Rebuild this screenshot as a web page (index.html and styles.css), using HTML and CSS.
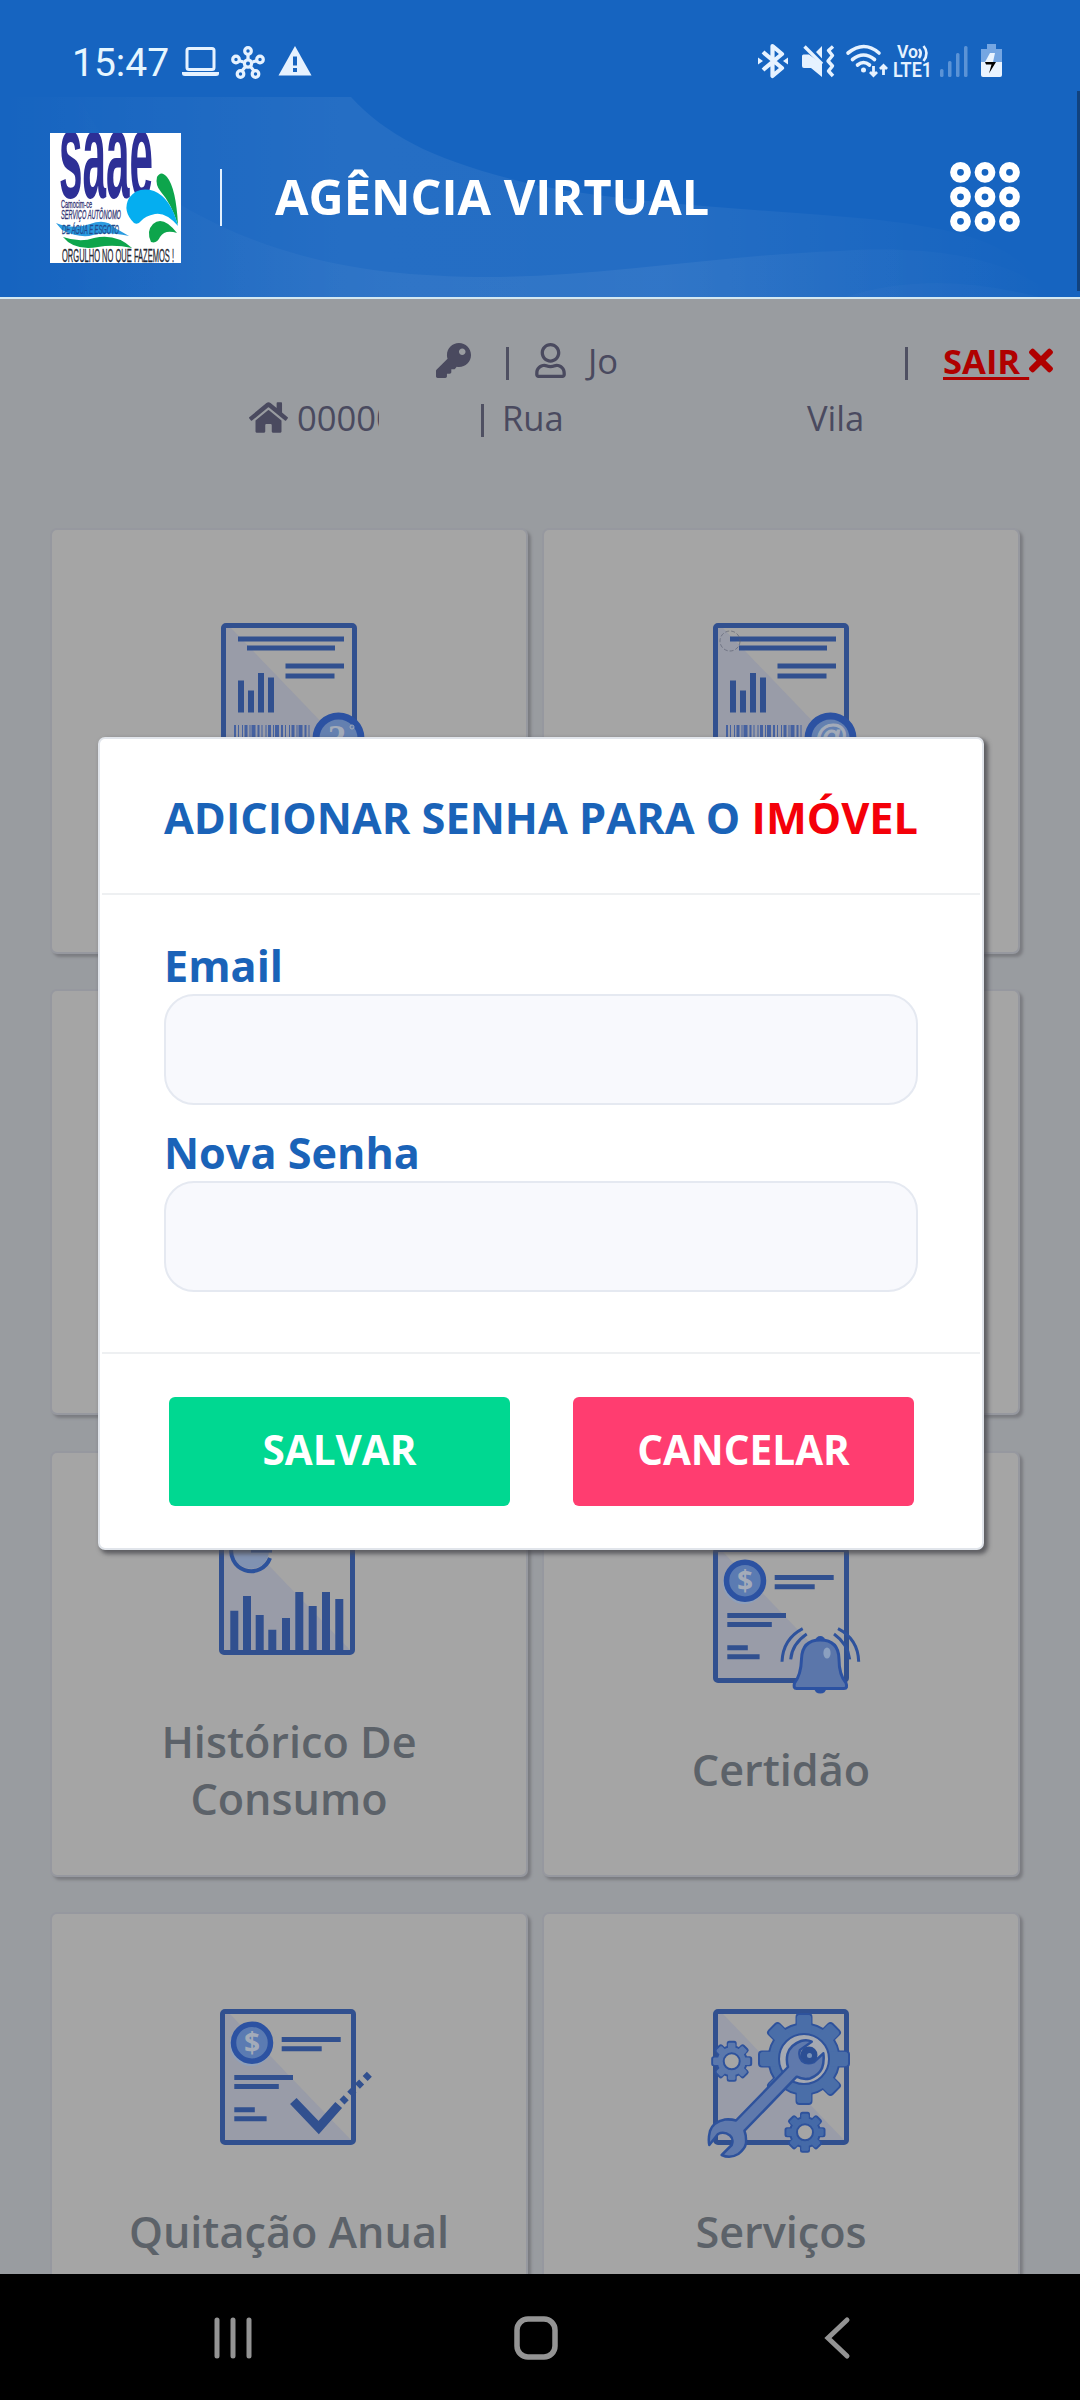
FILE: index.html
```html
<!DOCTYPE html>
<html lang="pt-BR">
<head>
<meta charset="utf-8">
<title>Agência Virtual</title>
<link rel="stylesheet" href="styles.css">
</head>
<body>
<div class="screen">
  <div class="status">
    <div class="status-left">
      <span class="clock">15:47</span>
      <svg class="ic-laptop" width="37" height="30" viewBox="0 0 37 30"><rect x="5" y="1.500" width="27" height="21" rx="2" fill="none" stroke="#e6f2ff" stroke-width="3"/><path d="M0 25h37v1.500q0 2.500-3 2.500H3q-3 0-3-2.500z" fill="#e6f2ff"/></svg>
      <svg class="ic-hub" width="34" height="34" viewBox="0 0 34 34" fill="none" stroke="#e6f2ff" stroke-width="3.200"><path d="M17 9v5M12.500 16l-5-1.500M21.500 16l5-1.500M14.500 20.500l-4 5M19.500 20.500l4 5"/><circle cx="17" cy="17.500" r="3.600"/><circle cx="17" cy="5" r="3.300"/><circle cx="5" cy="13.500" r="3.300"/><circle cx="29" cy="13.500" r="3.300"/><circle cx="9.500" cy="28" r="3.300"/><circle cx="24.500" cy="28" r="3.300"/></svg>
      <svg class="ic-warn" width="34" height="30" viewBox="0 0 34 30"><path d="M17 0L33.500 29.500H.5z" fill="#e6f2ff"/><path d="M15 10.500h4v9h-4zM15 22h4v4h-4z" fill="#1664c0"/></svg>
    </div>
    <div class="status-right">
      <svg width="30" height="34" viewBox="0 0 30 34"><path d="M5 8L24 24l-9.500 8V2L24 10 5 26" fill="none" stroke="#e6f2ff" stroke-width="4.200" stroke-linejoin="round"/><path d="M0 13.500l5 3.500-5 3.500zM30 13.500L25 17l5 3.500z" fill="#e6f2ff"/></svg>
      <svg class="ic-mute" width="32" height="34" viewBox="0 0 32 34"><path d="M0 12q0-1.500 1.500-1.500H7L20 20v13L9 24H2q-2 0-2-2zM20 2v12.500L14 8z" fill="#e6f2ff"/><path d="M2.500 2.500L20 20" stroke="#e6f2ff" stroke-width="3.400"/><path d="M31 2.500L26.500 6.500 30.500 11.500 26 17 30.500 22 26.500 27 31 32" fill="none" stroke="#e6f2ff" stroke-width="3.400" stroke-linejoin="round"/></svg>
      <svg class="ic-wifi" width="42" height="34" viewBox="0 0 42 34" fill="none" stroke="#e6f2ff" stroke-width="3.600" stroke-linecap="round"><path d="M2 9q16-13 31 0M6.500 15.500q11-9 22 0M11.500 21q6-5 12 0"/><circle cx="17.500" cy="26" r="2.500" fill="#e6f2ff" stroke="none"/><path d="M27.500 22v9m-3.500-3l3.500 3.500L31 28M37.500 31v-9m-3.500 3l3.500-3.500L41 25" stroke-width="2.800" stroke-linecap="butt"/></svg>
      <svg class="ic-lte" width="40" height="36" viewBox="0 0 40 36"><g fill="#e6f2ff" font-family="Roboto, sans-serif" font-weight="600"><text x="4" y="14" font-size="18" textLength="21" lengthAdjust="spacingAndGlyphs">Vo</text><text x="0" y="33" font-size="19.500" textLength="39" lengthAdjust="spacingAndGlyphs">LTE1</text></g><path d="M26 5q3.500 4 0 9M30.500 2q6 7 0 15" fill="none" stroke="#e6f2ff" stroke-width="2.600"/></svg>
      <svg class="ic-signal" width="28" height="32" viewBox="0 0 28 32" fill="#5b93d6"><rect x="0" y="23" width="3.500" height="8" rx="1.500"/><rect x="8" y="15" width="3.500" height="16" rx="1.500"/><rect x="16" y="7" width="3.500" height="24" rx="1.500"/><rect x="24" y="0" width="3.500" height="31" rx="1.500"/></svg>
      <svg class="ic-batt" width="21" height="34" viewBox="0 0 21 34"><path d="M6 0h9v5h6v13H0V5h6z" fill="#75a6e2"/><path d="M0 18h21v13q0 2-2 2H2q-2 0-2-2z" fill="#eaf4ff"/><path d="M9 9h5l-2 9H4z" fill="#eaf4ff"/><path d="M4 18h11L8 29.500l2.500-9H5z" fill="#000"/></svg>
    </div>
  </div>
  <header class="header">
    <svg class="waves" width="1077" height="200" viewBox="0 0 1077 200">
      <defs>
        <linearGradient id="w1" gradientUnits="userSpaceOnUse" x1="0" y1="0" x2="1040" y2="0"><stop offset="0" stop-color="#fff" stop-opacity="0"/><stop offset=".33" stop-color="#fff" stop-opacity=".065"/><stop offset=".65" stop-color="#fff" stop-opacity=".06"/><stop offset="1" stop-color="#fff" stop-opacity="0"/></linearGradient>
        <linearGradient id="w2" gradientUnits="userSpaceOnUse" x1="60" y1="0" x2="1060" y2="0"><stop offset="0" stop-color="#fff" stop-opacity="0"/><stop offset=".35" stop-color="#fff" stop-opacity=".05"/><stop offset=".6" stop-color="#fff" stop-opacity=".06"/><stop offset="1" stop-color="#fff" stop-opacity="0"/></linearGradient>
      </defs>
      <path d="M0 0H351C390 42 440 66 540 89 640 108 760 112 870 122 960 132 1020 145 1050 200H0z" fill="url(#w1)"/>
      <path d="M80 0C110 64 155 98 225 131 300 165 380 180 490 180 600 180 720 158 840 154 930 148 1010 160 1055 200H0V0z" fill="url(#w2)"/>
      <path d="M845 200Q930 172 1040 200z" fill="#fff" fill-opacity=".02"/>
    </svg>
    <svg class="logo" width="131" height="130" viewBox="0 0 131 130">
      <rect width="131" height="130" fill="#fff"/>
      <g font-family="'Liberation Sans', sans-serif">
        <text x="9" y="65" font-size="124" font-weight="700" fill="#2d2f96" textLength="94" lengthAdjust="spacingAndGlyphs">saae</text>
        <g fill="#2f3170" stroke="#2f3170" stroke-width=".3">
          <text x="11" y="75" font-size="11" textLength="31" lengthAdjust="spacingAndGlyphs">Camocim-ce</text>
          <text x="11" y="86" font-size="12" font-style="italic" textLength="60" lengthAdjust="spacingAndGlyphs">SERVIÇO AUTÔNOMO</text>
        </g>
        <path d="M6 90Q24 97 40 91t25 4l14 8Q55 98 43 102T12 97z" fill="#2b9be0"/>
        <text x="12" y="101" font-size="12" font-style="italic" fill="#234a8c" stroke="#234a8c" stroke-width=".3" textLength="57" lengthAdjust="spacingAndGlyphs">DE ÁGUA E ESGOTO</text>
        <path d="M13 104Q30 110 44 105 66 100 82 115 64 111 48 114 24 118 13 104z" fill="#0da54c"/>
        <text x="12" y="129" font-size="17.500" fill="#262833" stroke="#262833" stroke-width=".3" textLength="112" lengthAdjust="spacingAndGlyphs">ORGULHO NO QUE FAZEMOS !</text>
      </g>
      <path d="M107 44Q111 37 117 44 126 55 128 92 121 70 111 59 105 52 107 44z" fill="#0da54c"/>
      <path d="M84 90Q72 78 79 65 88 53 104 58 121 65 128 93 116 79 105 81 95 83 91 88 88 92 84 90z" fill="#05aef0"/>
      <path d="M101 109Q96 98 103 91 113 82 127 100 115 96 110 104 107 111 101 109z" fill="#0da54c"/>
    </svg>
    <span class="divider"></span>
    <h1 class="brand">AGÊNCIA VIRTUAL</h1>
    <svg class="menu" width="70" height="74" viewBox="0 0 70 74" fill="none" stroke="#fff" stroke-width="7"><g id="dots"><circle cx="10.500" cy="12.300" r="6.900"/><circle cx="35" cy="12.300" r="6.900"/><circle cx="59.500" cy="12.300" r="6.900"/></g><use href="#dots" y="24.500"/><use href="#dots" y="49"/></svg>
    <span class="edge"></span>
  </header>

  <main class="content">
    <div class="info">
      <div class="info-row row-user">
        <svg class="ic-key" width="35" height="35" viewBox="0 0 512 512"><path d="M512 176.001C512 273.203 433.202 352 336 352c-11.220 0-22.190-1.062-32.827-3.069l-24.012 27.014A23.999 23.999 0 0 1 261.223 384H224v40c0 13.255-10.745 24-24 24h-40v40c0 13.255-10.745 24-24 24H24c-13.255 0-24-10.745-24-24v-78.059c0-6.365 2.529-12.470 7.029-16.971l161.802-161.802C163.108 213.814 160 195.271 160 176 160 78.798 238.797.001 335.999 0 433.488-.001 512 78.511 512 176.001zM336 128c0 26.510 21.490 48 48 48s48-21.490 48-48-21.490-48-48-48-48 21.490-48 48z"/></svg>
        <span class="pipe"></span>
        <svg class="ic-user" width="31" height="35" viewBox="0 0 448 512"><path d="M313.600 304c-28.700 0-42.500 16-89.600 16-47.100 0-60.800-16-89.600-16C60.200 304 0 364.200 0 438.400V464c0 26.500 21.500 48 48 48h352c26.500 0 48-21.500 48-48v-25.600c0-74.200-60.200-134.400-134.400-134.400zM400 464H48v-25.600c0-47.600 38.800-86.400 86.400-86.400 14.600 0 38.300 16 89.600 16 51.700 0 74.900-16 89.600-16 47.600 0 86.400 38.800 86.400 86.400V464zM224 288c79.500 0 144-64.500 144-144S303.500 0 224 0 80 64.500 80 144s64.500 144 144 144zm0-240c52.900 0 96 43.100 96 96s-43.100 96-96 96-96-43.100-96-96 43.100-96 96-96z"/></svg>
        <span class="user-name">Jo</span>
        <span class="pipe"></span>
        <a class="logout"><span class="logout-text">SAIR&nbsp;</span><svg width="24" height="35" viewBox="0 0 352 512"><path d="M242.720 256l100.070-100.070c12.280-12.280 12.280-32.190 0-44.480l-22.240-22.240c-12.280-12.280-32.190-12.280-44.480 0L176 189.280 75.930 89.210c-12.280-12.280-32.190-12.280-44.480 0L9.210 111.450c-12.280 12.280-12.280 32.190 0 44.480L109.280 256 9.210 356.070c-12.280 12.280-12.280 32.190 0 44.480l22.240 22.240c12.280 12.280 32.200 12.280 44.480 0L176 322.720l100.070 100.070c12.280 12.280 32.200 12.280 44.480 0l22.240-22.240c12.280-12.280 12.280-32.190 0-44.480L242.720 256z"/></svg></a>
      </div>
      <div class="info-row row-home">
        <svg class="ic-home" width="39" height="35" viewBox="0 0 576 512"><path d="M280.370 148.260L96 300.110V464a16 16 0 0 0 16 16l112.060-.29a16 16 0 0 0 15.920-16V368a16 16 0 0 1 16-16h64a16 16 0 0 1 16 16v95.640a16 16 0 0 0 16 16.050L464 480a16 16 0 0 0 16-16V300L295.670 148.260a12.190 12.190 0 0 0-15.300 0zM571.600 251.470L488 182.560V44.050a12 12 0 0 0-12-12h-56a12 12 0 0 0-12 12v72.610L318.470 43a48 48 0 0 0-61 0L4.340 251.470a12 12 0 0 0-1.600 16.900l25.500 31A12 12 0 0 0 45.150 301l235.220-193.740a12.190 12.190 0 0 1 15.300 0L530.900 301a12 12 0 0 0 16.900-1.600l25.500-31a12 12 0 0 0-1.700-16.930z"/></svg>
        <span class="code">00000</span>
        <span class="pipe"></span>
        <span class="street">Rua</span>
        <span class="district">Vila</span>
      </div>
    </div>

    <svg class="defs" width="0" height="0">
      <defs>
        <g id="frame"><path d="M10 5H5v126h126z" fill="#999ca8" stroke="none"/><rect x="2.500" y="2.500" width="131" height="131" rx="2.500" fill="none" stroke="#31508f" stroke-width="5"/></g>
        <g id="bill">
          <use href="#frame"/>
          <path d="M17 13.500h106v5H17zM26 22.500h88v5H26zM64.500 40.500h58.500v5H64.500zM64.500 50.500h49v5h-49zM17 57.500h6v32h-6zM27 67.500h6v22h-6zM37 50h6v39.500h-6zM47 54.500h6v35h-6z" fill="#31508f"/>
          <path d="M13 108.500h78" stroke="#4561a0" stroke-width="13" stroke-dasharray="2 2 1 3 1 1.500 3 2 1 1 4 2"/>
          <circle cx="117.500" cy="115.500" r="22.500" fill="#6480b0" stroke="#2c52a2" stroke-width="7"/>
        </g>
        <g id="statement">
          <use href="#frame"/>
          <circle cx="31" cy="36" r="21" fill="#8fa0bb"/>
          <circle cx="32" cy="33.700" r="18.500" fill="#5b7bb2" stroke="#2c52a2" stroke-width="5.500"/>
          <path d="M61.700 28h59v5h-59zM61.700 37.200h40v5h-40zM14.300 66h58.700v5H14.300zM14.300 75h44.500v5H14.300zM14.300 98.300h20.500v5H14.300zM14.300 107.300h32.300v5H14.300z" fill="#31508f"/>
          <text x="32" y="43.500" font-size="28" font-weight="700" text-anchor="middle" font-family="'Open Sans', sans-serif" fill="#a3abb9">$</text>
        </g>
        <g id="teeth-big"><rect x="-7.500" y="-45" width="15" height="90" rx="3"/><rect x="-45" y="-7.500" width="90" height="15" rx="3"/></g>
        <g id="teeth-small"><rect x="-4" y="-19.500" width="8" height="39" rx="1.500"/><rect x="-19.500" y="-4" width="39" height="8" rx="1.500"/></g>
        <g id="gear-small"><g stroke="#2e529c" stroke-width="2"><use href="#teeth-small"/><use href="#teeth-small" transform="rotate(45)"/><circle r="15"/></g><g stroke="none"><use href="#teeth-small" transform="scale(.94)"/><use href="#teeth-small" transform="rotate(45) scale(.94)"/></g><circle r="8" fill="#a5a5a5" stroke="#2e529c" stroke-width="2"/></g>
      </defs>
    </svg>

    <div class="cards">
      <section class="card card-top">
        <svg class="card-icon" width="136" height="136" viewBox="0 0 136 136"><use href="#bill"/><text x="116" y="128" font-size="37" font-weight="700" text-anchor="middle" font-family="'Liberation Serif', serif" fill="#a3abb9">?</text><circle cx="131" cy="104" r="2" fill="none" stroke="#a3abb9"/></svg>
        <h2 class="card-title"></h2>
      </section>
      <section class="card card-top">
        <svg class="card-icon" width="136" height="136" viewBox="0 0 136 136"><use href="#bill"/><text x="118" y="125" font-size="33" font-style="italic" text-anchor="middle" font-family="'Liberation Sans', sans-serif" fill="#a3abb9" stroke="#a3abb9">@</text><circle cx="17" cy="18" r="10" fill="none" stroke="#555a6c" stroke-width=".6" stroke-dasharray="4 2"/></svg>
        <h2 class="card-title"></h2>
      </section>
      <section class="card"></section>
      <section class="card"></section>
      <section class="card">
        <svg class="card-icon icon-history" width="136" height="136" viewBox="0 0 136 136"><use href="#frame"/><circle cx="32" cy="31.700" r="18" fill="#8092b1"/><path d="M51 39A20 20 0 1 1 38 13M32 31.500h21" fill="none" stroke="#2c529c" stroke-width="4"/><path d="M11.300 91.700h8V133h-8zM24 77h8v56h-8zM36.700 96h8v37h-8zM49.300 110.700h8V133h-8zM63 99h8v34h-8zM76.300 73h8v60h-8zM89.700 87h8v46h-8zM103 73h8v60h-8zM116.300 80h8v53h-8z" fill="#31508f"/></svg>
        <h2 class="card-title">Histórico De<br>Consumo</h2>
      </section>
      <section class="card">
        <svg class="card-icon" width="136" height="136" viewBox="0 0 136 136"><use href="#statement"/><g fill="none" stroke="#2e529c" stroke-width="3"><path d="M89.700 81.700Q70 92 69 114.700M93.700 87Q79 97 77.700 112.300M125 81.700Q145 92 145.700 114.700M121 87Q135 97 136.700 112.300"/></g><circle cx="107.300" cy="94" r="5" fill="#2c52a2"/><path d="M101 141h12.600q-1 5.500-6.300 5.500t-6.300-5.500z" fill="#2c52a2"/><path d="M88.500 112Q89 93 107.300 93T126 112Q126 128 133 136 135 141.500 131 141.500H83.500Q80 141.500 81.500 136 88 128 88.500 112z" fill="#5b76aa" stroke="#2c52a2" stroke-width="3"/><ellipse cx="114" cy="106" rx="3.600" ry="5.500" fill="#8ba0c0"/></svg>
        <h2 class="card-title">Certidão</h2>
      </section>
      <section class="card">
        <svg class="card-icon icon-check" width="136" height="136" viewBox="0 0 136 136"><use href="#statement"/><path d="M73.300 92L98.700 118.500 118.700 96" fill="none" stroke="#31508f" stroke-width="9"/><path d="M122 93L152 62.500" stroke="#31508f" stroke-width="7" stroke-dasharray="6 5"/></svg>
        <h2 class="card-title">Quitação Anual</h2>
      </section>
      <section class="card">
        <svg class="card-icon" width="136" height="136" viewBox="0 0 136 136"><use href="#frame"/>
          <g transform="translate(91 50)"><g fill="#4a6ea8" stroke="#2e529c" stroke-width="2"><use href="#teeth-big"/><use href="#teeth-big" transform="rotate(45)"/><circle r="35.500"/></g><g fill="#4a6ea8"><use href="#teeth-big" transform="scale(.97 .97)"/><use href="#teeth-big" transform="rotate(45) scale(.97 .97)"/></g><circle r="25" fill="#a5a9b2" stroke="#2e529c" stroke-width="2"/></g>
          <g fill="#5b78ac"><use href="#gear-small" transform="translate(18.700 52.300)"/></g>
          <g fill="#456aa8"><use href="#gear-small" transform="translate(92 123.300)"/></g>
          <path d="M98.700 32.700Q94 30 88 32 77 36 74.500 45 73 52 75 58L23 111.500Q18 110 12 110.500 0 113 -3 122 -5 130 -3.700 136L5 125Q11 122 17 126.500 21 130 18.700 136L8.700 146Q17 150 25.300 145 32 140 33 134.300 33.500 127 31.500 121.700L83.700 67.700Q90 71 97 69.500 106 66 109 59.300 111.500 52 110.300 44.300L101 53Q94 56 89 52 85 47 87 41z" fill="#5f79ac" stroke="#2e529c" stroke-width="2.500" stroke-linejoin="round"/>
          <circle cx="96" cy="46" r="8.500" fill="#2c4f94"/><circle cx="96.500" cy="46.500" r="2.500" fill="#7891b8"/>
        </svg>
        <h2 class="card-title">Serviços</h2>
      </section>
    </div>
  </main>

  <nav class="nav">
    <svg class="nav-recent" width="38" height="44" viewBox="0 0 38 44" stroke="#949494" stroke-width="5" stroke-linecap="round"><path d="M3 4v36M19 4v36M35 4v36"/></svg>
    <svg class="nav-home" width="44" height="44" viewBox="0 0 44 44"><rect x="3" y="3" width="38" height="38" rx="11" fill="none" stroke="#949494" stroke-width="5.500"/></svg>
    <svg class="nav-back" width="26" height="44" viewBox="0 0 26 44"><path d="M23 4L4 22l19 18" fill="none" stroke="#949494" stroke-width="5" stroke-linecap="round"/></svg>
  </nav>

  <div class="modal">
    <div class="modal-head"><h3 class="modal-title">ADICIONAR SENHA PARA O <span class="red">IMÓVEL</span></h3></div>
    <form class="modal-body">
      <label class="label" for="email">Email</label>
      <input class="field" id="email" type="text">
      <label class="label label-next" for="senha">Nova Senha</label>
      <input class="field" id="senha" type="password">
    </form>
    <div class="modal-foot">
      <button class="btn save">SALVAR</button>
      <button class="btn cancel">CANCELAR</button>
    </div>
  </div>
</div>
</body>
</html>
```
FILE: styles.css
```css
* { box-sizing: border-box; }
body { margin: 0; font-family: "Open Sans", sans-serif; }
svg { display: block; flex: none; overflow: visible; }
h1, h2, h3 { margin: 0; }

.screen { position: relative; display: flex; flex-direction: column; width: 1080px; height: 2400px; overflow: hidden; background: #999ca0; }

.status { display: flex; justify-content: space-between; flex: none; height: 97px; padding: 0 78px 0 72px; background: #1664c0; }
.status-left { display: flex; align-items: flex-start; padding-top: 46px; }
.clock { width: 110px; font: 400 39px/46px Roboto, sans-serif; color: #e6f6ff; margin-top: -6px; white-space: nowrap; }
.ic-laptop { margin-top: 1px; }
.ic-hub { margin-left: 12px; }
.ic-warn { margin-left: 13px; }
.status-right { display: flex; align-items: flex-start; padding-top: 44px; }
.ic-mute { margin-left: 14px; }
.ic-wifi { margin-left: 12px; }
.ic-lte { margin-left: 5px; }
.ic-signal { margin: 2px 0 0 7px; }
.ic-batt { margin-left: 13px; }

.header { position: relative; display: flex; align-items: center; flex: none; height: 202px; padding: 0 0 0 50px; background: #1664c0; border-bottom: 2px solid #d3e8f2; }
.waves { position: absolute; left: 0; top: 0; }
.logo { position: relative; overflow: hidden; margin-top: 1px; }
.divider { width: 2px; height: 57px; margin-left: 39px; background: #e2f1ff; }
.brand { position: relative; width: 620px; margin: -2px 0 0 53px; font-size: 48.600px; line-height: 66px; font-weight: 700; color: #fff; white-space: nowrap; }
.menu { position: relative; margin-left: 55px; }
.edge { position: absolute; right: 0; top: -6px; width: 3px; height: 200px; background: #11427e; }

.content { flex: 1; overflow: hidden; min-height: 0; }
.info { height: 228.500px; padding-top: 33px; color: #4a4a5f; fill: #4a4a5f; font-size: 34.600px; }
.info-row { display: flex; align-items: center; height: 57px; white-space: nowrap; }
.row-user { padding-left: 436px; }
.pipe { width: 3px; height: 33px; margin-top: 6px; background: #4f5062; }
.row-user .ic-key + .pipe { margin-left: 35px; }
.ic-user { margin-left: 26px; }
.user-name { width: 317px; margin-left: 22px; }
.logout { display: flex; align-items: center; margin-left: 35px; color: #b00000; fill: #b00000; font-weight: 700; }
.logout-text { width: 86px; text-decoration: underline; text-decoration-thickness: 3px; text-underline-offset: 3px; }
.row-home { padding-left: 249px; }
.code { width: 82px; margin-left: 9px; overflow: hidden; }
.row-home .pipe { margin-left: 102px; }
.street { width: 305px; margin-left: 18px; }

.defs { position: absolute; }
.cards { display: grid; grid-template-columns: 478px 478px; grid-auto-rows: 426px; gap: 35.500px 14px; padding-left: 50px; }
.card { display: flex; flex-direction: column; align-items: center; justify-content: center; padding-top: 18px; background: #a5a5a5; border: 2px solid #96989f; border-radius: 7px; box-shadow: 3px 3px 3px #7b7c81; }
.card-top { padding-top: 15px; }
.icon-history { margin-right: 4px; }
.icon-check { margin-right: 2px; }
.card-title { min-height: 57px; margin-top: 58px; font-size: 43.200px; line-height: 57px; font-weight: 600; text-align: center; color: #5c6269; }

.nav { display: flex; align-items: center; flex: none; height: 126px; padding: 1px 0 0 214px; background: #000; }
.nav-home { margin-left: 262px; }
.nav-back { margin-left: 266px; }

.modal { position: absolute; left: 98px; top: 737px; width: 886px; height: 813px; display: flex; flex-direction: column; background: #fff; border: 2px solid #e1e5eb; border-radius: 7px; box-shadow: 3px 3px 4px 1px rgba(70, 70, 75, .75); }
.modal-head { display: flex; align-items: center; height: 156px; margin: 0 2px; padding: 3px 0 0 62px; border-bottom: 2px solid #eef0f2; }
.modal-title { font-size: 43.300px; line-height: 58px; font-weight: 700; color: #1a63b8; white-space: nowrap; }
.red { color: #f40009; }
.modal-body { display: flex; flex-direction: column; height: 457px; padding: 42px 64px 0; }
.label { height: 57px; font-size: 43.200px; line-height: 58px; font-weight: 700; color: #1a63b8; }
.label-next { margin-top: 19px; }
.field { width: 754px; height: 111px; border: 2px solid #e5e9f1; border-radius: 30px; background: #f8f9fd; }
.modal-foot { display: flex; gap: 63px; margin: 0 2px; padding: 43px 0 0 67px; border-top: 2px solid #eef0f2; }
.btn { width: 341px; height: 109px; padding: 0 0 3px; border: 0; border-radius: 6px; font: 700 40.500px/58px "Open Sans", sans-serif; color: #fff; }
.save { background: #00d891; }
.cancel { background: #ff3d70; }
```
